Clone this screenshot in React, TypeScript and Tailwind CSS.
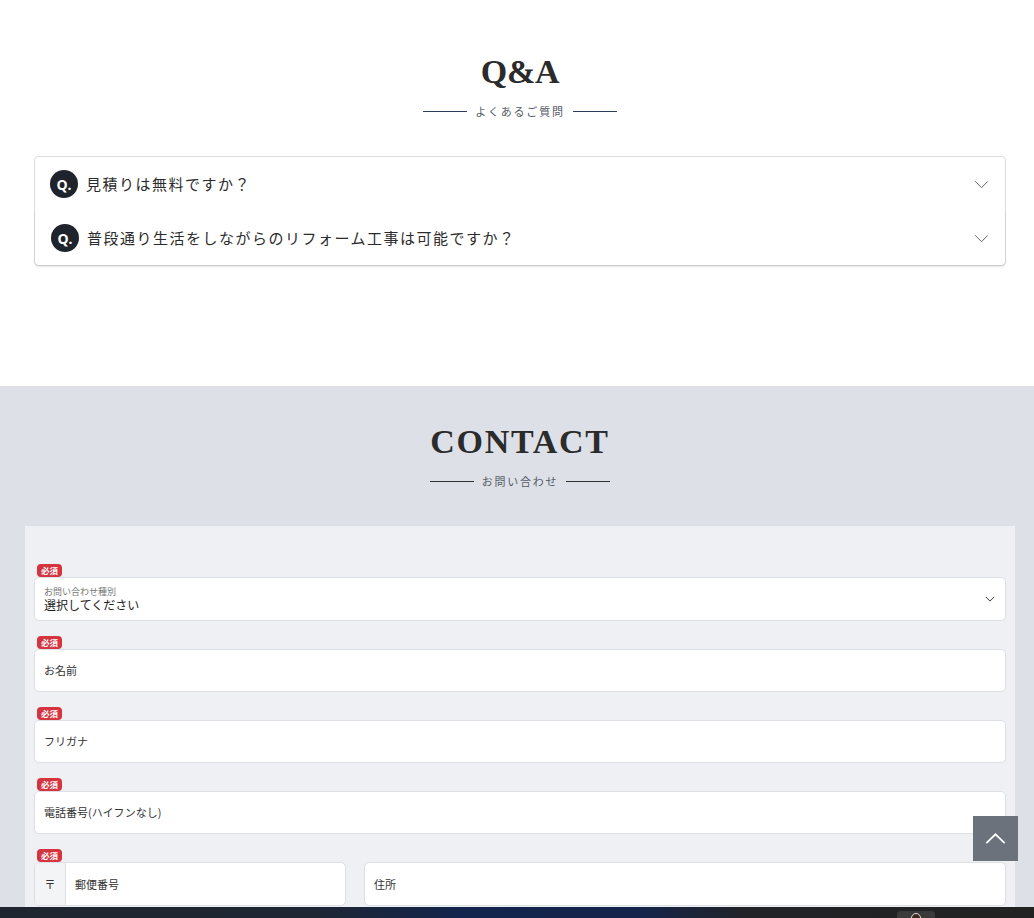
import React from 'react';

const serif = { fontFamily: '"Liberation Serif", "Noto Sans CJK JP", serif' };
const jp = { fontFamily: '"Noto Sans CJK JP", "Noto Sans", sans-serif' };

const questions = ['見積りは無料ですか？', '普段通り生活をしながらのリフォーム工事は可能ですか？'];

const Heading: React.FC<{ title: string; sub: string; line: string; tracking: string }> = ({
  title,
  sub,
  line,
  tracking,
}) => (
  <div className="flex flex-col items-center">
    <h2 className={`text-[34px] leading-[42px] font-bold text-[#2b2b2b] ${tracking}`} style={serif}>
      {title}
    </h2>
    <div className="mt-[10px] flex items-center gap-2 h-4">
      <span className={`block w-11 h-px ${line}`} />
      <span className="text-[11px] leading-4 tracking-[0.16em] text-[#555b66]">{sub}</span>
      <span className={`block w-11 h-px ${line}`} />
    </div>
  </div>
);

const Required: React.FC = () => (
  <span className="inline-flex items-center justify-center w-[25px] h-[13px] rounded-[4px] bg-[#d5343f] text-white text-[8.5px] font-bold leading-none">
    必須
  </span>
);

const Field: React.FC<{ placeholder: string }> = ({ placeholder }) => (
  <div className="mt-[15px]">
    <div className="flex h-[13px] pl-[3px]">
      <Required />
    </div>
    <div className="h-[43px] bg-white border border-[#dcdfe4] rounded-[5px] flex items-center px-[9px] text-[11px] text-[#333]">
      {placeholder}
    </div>
  </div>
);

const Chevron: React.FC<{ className?: string }> = ({ className }) => (
  <svg viewBox="0 0 16 10" className={className} fill="none" stroke="currentColor">
    <polyline points="1,1.5 8,8.5 15,1.5" />
  </svg>
);

const App: React.FC = () => {
  return (
    <div className="bg-white min-h-[918px]" style={jp}>
      {/* Q&A */}
      <section className="pt-[51px] h-[386px] pl-[34px] pr-[28px]">
        <Heading title="Q&A" sub="よくあるご質問" line="bg-[#2c3d5e]" tracking="tracking-[-0.01em]" />
        <div className="mt-[37px] border border-[#dcdcdc] rounded-[4px] bg-white">
          {questions.map((q, i) => (
            <div
              key={q}
              className={`h-[54px] flex items-center pr-[15px] ${
                i === 1 ? 'shadow-[0_2px_3px_rgba(0,0,0,0.1)] rounded-b-[4px] pl-[16px]' : 'pl-[15px]'
              }`}
            >
              <span
                className="w-7 h-7 rounded-full bg-[#1f232b] text-white flex items-center justify-center text-[14px] font-bold"
                style={{ fontFamily: '"Open Sans", sans-serif' }}
              >
                Q.
              </span>
              <span className="ml-2 text-[15px] tracking-[0.1em] text-[#2b2b2b]">{q}</span>
              <Chevron className="ml-auto w-[15px] h-[9px] text-[#555] mr-[1px]" />
            </div>
          ))}
        </div>
      </section>

      {/* CONTACT */}
      <section className="bg-[#dde1e7] pt-[35px] pl-[25px] pr-[19px] pb-10">
        <Heading title="CONTACT" sub="お問い合わせ" line="bg-[#333]" tracking="tracking-[0.05em]" />
        <div className="mt-[37px] bg-[#eef0f3] pt-[38px] pl-[9px] pr-[9px] pb-10">
          <div>
            <div className="flex h-[13px] pl-[3px]">
              <Required />
            </div>
            <div className="h-[44px] bg-white border border-[#dcdfe4] rounded-[5px] flex items-center px-[9px]">
              <div className="flex flex-col">
                <span className="text-[9px] leading-[11px] text-[#777]">お問い合わせ種別</span>
                <span className="text-[12px] leading-[16px] text-[#222]">選択してください</span>
              </div>
              <Chevron className="ml-auto w-[10px] h-[6px] text-[#333] mr-[1px] stroke-[1.6]" />
            </div>
          </div>
          <Field placeholder="お名前" />
          <Field placeholder="フリガナ" />
          <Field placeholder="電話番号(ハイフンなし)" />
          <div className="mt-[15px]">
            <div className="flex h-[13px] pl-[3px]">
              <Required />
            </div>
            <div className="flex gap-[18px]">
              <div className="w-[312px] h-[44px] bg-white border border-[#dcdfe4] rounded-[5px] flex overflow-hidden">
                <span className="w-[31px] bg-[#f3f4f6] border-r border-[#dcdfe4] flex items-center justify-center text-[11px] text-[#333]">
                  〒
                </span>
                <span className="flex items-center px-[9px] text-[11px] text-[#333]">郵便番号</span>
              </div>
              <div className="flex-1 h-[44px] bg-white border border-[#dcdfe4] rounded-[5px] flex items-center px-[9px] text-[11px] text-[#333]">
                住所
              </div>
            </div>
          </div>
          <div className="mt-[15px] h-[43px] bg-white border border-[#dcdfe4] rounded-[5px]" />
        </div>
      </section>

      {/* page top button */}
      <button
        type="button"
        className="fixed right-[16px] bottom-[57px] w-[45px] h-[45px] bg-[#6b727c] flex items-center justify-center"
      >
        <svg viewBox="0 0 22 12" className="w-[21px] h-[11px]" fill="none" stroke="white" strokeWidth="2">
          <polyline points="1,11 11,1.5 21,11" />
        </svg>
      </button>

      {/* fixed bottom bar */}
      <div className="fixed left-0 right-0 bottom-0 h-[11px] bg-[linear-gradient(90deg,#1f2630_0%,#1e2633_30%,#13254d_45%,#15244a_62%,#222327_72%,#222_100%)]">
        <div className="absolute left-[897px] top-[4px] w-[38px] h-[10px] rounded-t-[4px] bg-[#3a3a3a] flex justify-center">
          <span className="mt-[2px] w-[10px] h-[10px] rounded-full bg-[#3b2a22] border border-[#e8e0d8]" />
        </div>
      </div>
    </div>
  );
};

export default App;
